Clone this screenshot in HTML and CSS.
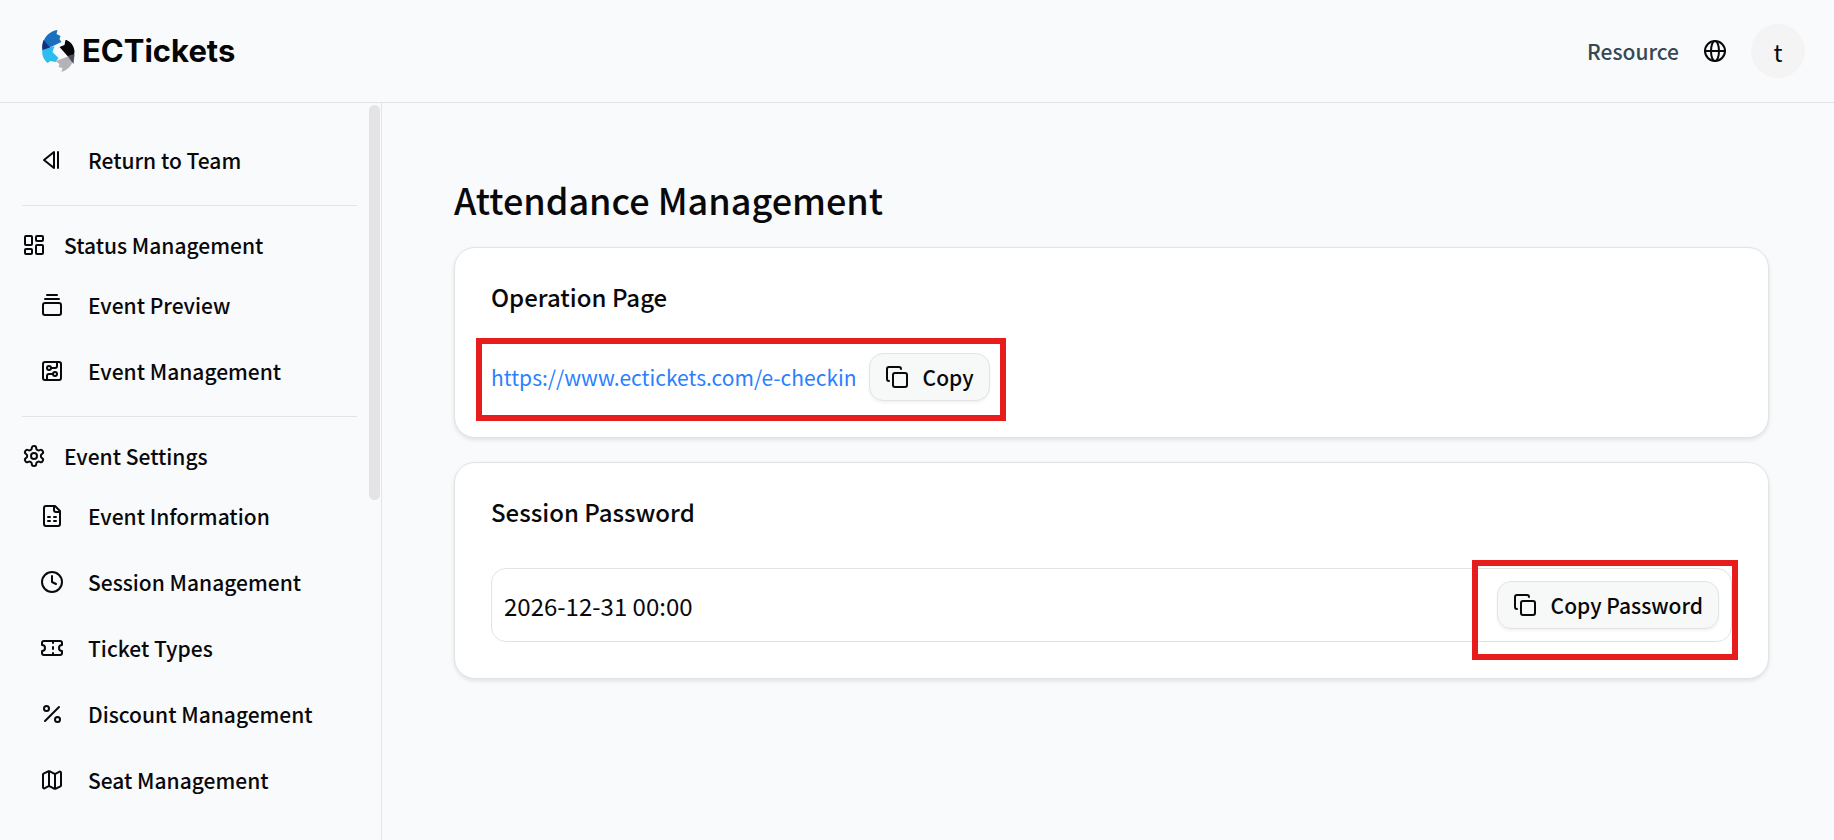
FILE: index.html
```html
<!DOCTYPE html>
<html lang="en">
<head>
    <meta charset="UTF-8">
    <meta name="viewport" content="width=device-width, initial-scale=1.0">
    <title>Attendance Management - ECTickets</title>
    <link rel="stylesheet" href="styles.css">
</head>
<body>
<header class="topbar">
    <a href="#" class="logo">
        <svg class="logo-mark" viewBox="0 0 34 42" aria-hidden="true">
            <path fill="#1a70bf" d="M16 0l-1 4 4 2-1 3 2 3L5 19 1 16C2 7 8 1 16 0z"/>
            <path fill="#14307c" d="M2 10l7 8-8 3C0 17 1 13 2 10z"/>
            <path fill="#2bbdee" d="M1 20l12-4-2 6 6 6-3 4-5-1-3 2C2 29 0 25 1 20z"/>
            <path fill="#050505" d="M25 10c5 2 8 7 8 12l-1 5-6-1-8-9 5-2 1-5z"/>
            <path fill="#b5b3b5" d="M33 25c-1 9-6 15-13 17l1-4-4-1 1-3-4-3 14-5z"/>
            <path fill="#4b4f5b" d="M33 24l-1 10-6-8z"/>
        </svg>
        <span>ECTickets</span>
    </a>
    <div class="topbar-right">
        <a href="#" class="resource">Resource</a>
        <button class="icon-button" aria-label="Language">
            <svg class="icon" viewBox="0 0 24 24"><circle cx="12" cy="12" r="10"/><ellipse cx="12" cy="12" rx="4" ry="10"/><path d="M2 12h20"/></svg>
        </button>
        <button class="avatar">t</button>
    </div>
</header>

<div class="layout">
    <aside class="sidebar">
        <nav>
            <a href="#" class="item">
                <svg class="icon" viewBox="0 0 24 24"><path d="M14 4v16L4 12zM18 4v16"/></svg>
                Return to Team
            </a>

            <hr>
            <h2 class="group">
                <svg class="icon" viewBox="0 0 24 24"><rect x="3" y="3" width="7" height="9" rx="1"/><rect x="14" y="3" width="7" height="5" rx="1"/><rect x="14" y="12" width="7" height="9" rx="1"/><rect x="3" y="16" width="7" height="5" rx="1"/></svg>
                Status Management
            </h2>
            <a href="#" class="item">
                <svg class="icon" viewBox="0 0 24 24"><path d="M7 2h10M5 6h14"/><rect x="3" y="10" width="18" height="12" rx="2"/></svg>
                Event Preview
            </a>
            <a href="#" class="item">
                <svg class="icon" viewBox="0 0 24 24"><rect x="3" y="3" width="18" height="18" rx="2"/><path d="M11 9h4a2 2 0 0 0 2-2V3M7 21v-4a2 2 0 0 1 2-2h4"/><circle cx="9" cy="9" r="2"/><circle cx="15" cy="15" r="2"/></svg>
                Event Management
            </a>

            <hr>
            <h2 class="group">
                <svg class="icon" viewBox="0 0 24 24"><path d="M12.22 2h-.44a2 2 0 0 0-2 2v.18a2 2 0 0 1-1 1.73l-.43.25a2 2 0 0 1-2 0l-.15-.08a2 2 0 0 0-2.73.73l-.22.38a2 2 0 0 0 .73 2.73l.15.1a2 2 0 0 1 1 1.72v.51a2 2 0 0 1-1 1.74l-.15.09a2 2 0 0 0-.73 2.73l.22.38a2 2 0 0 0 2.73.73l.15-.08a2 2 0 0 1 2 0l.43.25a2 2 0 0 1 1 1.73V20a2 2 0 0 0 2 2h.44a2 2 0 0 0 2-2v-.18a2 2 0 0 1 1-1.73l.43-.25a2 2 0 0 1 2 0l.15.08a2 2 0 0 0 2.73-.73l.22-.39a2 2 0 0 0-.73-2.73l-.15-.08a2 2 0 0 1-1-1.74v-.5a2 2 0 0 1 1-1.74l.15-.09a2 2 0 0 0 .73-2.73l-.22-.38a2 2 0 0 0-2.73-.73l-.15.08a2 2 0 0 1-2 0l-.43-.25a2 2 0 0 1-1-1.73V4a2 2 0 0 0-2-2z"/><circle cx="12" cy="12" r="3"/></svg>
                Event Settings
            </h2>
            <a href="#" class="item">
                <svg class="icon" viewBox="0 0 24 24"><path d="M15 2H6a2 2 0 0 0-2 2v16a2 2 0 0 0 2 2h12a2 2 0 0 0 2-2V7zM14 2v4a2 2 0 0 0 2 2h4M8 13h2M14 13h2M8 17h2M14 17h2"/></svg>
                Event Information
            </a>
            <a href="#" class="item">
                <svg class="icon" viewBox="0 0 24 24"><circle cx="12" cy="12" r="10"/><path d="M12 6v6l4 2"/></svg>
                Session Management
            </a>
            <a href="#" class="item">
                <svg class="icon" viewBox="0 0 24 24"><path d="M2 9a3 3 0 0 1 0 6v2a2 2 0 0 0 2 2h16a2 2 0 0 0 2-2v-2a3 3 0 0 1 0-6V7a2 2 0 0 0-2-2H4a2 2 0 0 0-2 2zM13 5v2M13 17v2M13 11v2"/></svg>
                Ticket Types
            </a>
            <a href="#" class="item">
                <svg class="icon" viewBox="0 0 24 24"><path d="M19 5L5 19"/><circle cx="6.500" cy="6.500" r="2.500"/><circle cx="17.500" cy="17.500" r="2.500"/></svg>
                Discount Management
            </a>
            <a href="#" class="item">
                <svg class="icon" viewBox="0 0 24 24"><path d="M14.100 5.550a2 2 0 0 0 1.800 0l3.650-1.830A1 1 0 0 1 21 4.620v12.760a1 1 0 0 1-.55.900l-4.550 2.270a2 2 0 0 1-1.800 0l-4.200-2.100a2 2 0 0 0-1.800 0l-3.650 1.830A1 1 0 0 1 3 19.380V6.620a1 1 0 0 1 .55-.900l4.550-2.270a2 2 0 0 1 1.800 0zM15 5.760v15M9 3.240v15"/></svg>
                Seat Management
            </a>
        </nav>
        <div class="scroll-thumb"></div>
    </aside>

    <main>
        <h1>Attendance Management</h1>

        <section class="card">
            <h2>Operation Page</h2>
            <div class="link-row marked">
                <a href="https://www.ectickets.com/e-checkin">https://www.ectickets.com/e-checkin</a>
                <button class="copy-button">
                    <svg class="icon" viewBox="0 0 24 24"><rect x="8" y="8" width="14" height="14" rx="2"/><path d="M4 16a2 2 0 0 1-2-2V4a2 2 0 0 1 2-2h10a2 2 0 0 1 2 2"/></svg>
                    Copy
                </button>
            </div>
        </section>

        <section class="card">
            <h2>Session Password</h2>
            <div class="session-row">
                <span>2026-12-31 00:00</span>
                <div class="marked marked-wide">
                    <button class="copy-button">
                        <svg class="icon" viewBox="0 0 24 24"><rect x="8" y="8" width="14" height="14" rx="2"/><path d="M4 16a2 2 0 0 1-2-2V4a2 2 0 0 1 2-2h10a2 2 0 0 1 2 2"/></svg>
                        Copy Password
                    </button>
                </div>
            </div>
        </section>
    </main>
</div>
</body>
</html>
```
FILE: styles.css
```css
* {
    box-sizing: border-box;
}

body {
    font-family: "Noto Sans CJK TC", "Noto Sans", sans-serif;
    margin: 0;
    height: 100vh;
    display: flex;
    flex-direction: column;
    background-color: #f9fafc;
    color: #09090b;
    font-size: 21px;
    overflow: hidden;
}

h1, h2 {
    margin: 0;
    font-weight: 500;
}

a {
    color: inherit;
    text-decoration: none;
}

button {
    font: inherit;
    color: inherit;
    cursor: pointer;
}

.icon {
    width: 24px;
    height: 24px;
    flex: none;
    fill: none;
    stroke: currentColor;
    stroke-width: 2;
    stroke-linecap: round;
    stroke-linejoin: round;
}

/* Top bar */
.topbar {
    display: flex;
    align-items: center;
    justify-content: space-between;
    padding: 24px 29px 24px 41px;
    border-bottom: 1px solid #e4e4e7;
}

.logo {
    display: flex;
    align-items: center;
    gap: 6px;
    font-family: Inter, sans-serif;
    font-size: 31px;
    font-weight: 700;
    line-height: 44px;
    color: #050505;
}

.logo-mark {
    width: 35px;
    height: 42px;
}

.topbar-right {
    display: flex;
    align-items: center;
}

.resource {
    color: #364852;
    font-weight: 500;
    margin-right: 24px;
}

.icon-button {
    display: flex;
    padding: 0;
    border: none;
    background: none;
    margin-right: 24px;
}

.avatar {
    width: 54px;
    height: 54px;
    padding: 0;
    border: none;
    border-radius: 50%;
    background-color: #f4f4f4;
    font-size: 24px;
}

.layout {
    flex: 1;
    display: flex;
    min-height: 0;
}

/* Sidebar */
.sidebar {
    position: relative;
    width: 382px;
    flex: none;
    padding: 24px 24px 0 22px;
    border-right: 1px solid #e4e4e7;
    overflow: hidden;
}

.sidebar hr {
    margin: 12px 0;
    border: none;
    border-top: 1px solid #e4e4e7;
}

.group,
.item {
    display: flex;
    align-items: center;
    font-size: 21px;
    font-weight: 500;
}

.group {
    height: 54px;
    gap: 18px;
}

.item {
    height: 66px;
    gap: 24px;
    padding-left: 18px;
}

.scroll-thumb {
    position: absolute;
    top: 2px;
    right: 1px;
    width: 11px;
    height: 395px;
    border-radius: 6px;
    background-color: #e4e4e6;
}

/* Content */
main {
    flex: 1;
    padding: 72px 65px 24px 72px;
}

h1 {
    font-size: 36px;
    line-height: 48px;
    margin-bottom: 24px;
}

.card {
    background-color: white;
    border: 1px solid #e2e4e4;
    border-radius: 21px;
    padding: 36px;
    margin-bottom: 24px;
    box-shadow: 0 2px 4px rgba(0, 0, 0, 0.1);
}

.card h2 {
    font-size: 24px;
    line-height: 26px;
    margin-bottom: 43px;
}

.link-row {
    display: flex;
    align-items: center;
    gap: 12px;
    width: fit-content;
}

.link-row a {
    color: #2b7fff;
}

.copy-button {
    display: flex;
    align-items: center;
    gap: 14px;
    height: 48px;
    padding: 0 15px;
    border: 1px solid #e2e4e4;
    border-radius: 14px;
    background-color: #f7f9f9;
    font-weight: 500;
    box-shadow: 0 2px 3px rgba(0, 0, 0, 0.05);
}

.session-row {
    display: flex;
    align-items: center;
    justify-content: space-between;
    padding: 12px;
    border: 1px solid #e2e4e4;
    border-radius: 15px;
    font-size: 24px;
}

.session-row .copy-button {
    font-size: 21px;
}

/* Red frame around the parts to click */
.marked {
    position: relative;
}

.marked::after {
    content: "";
    position: absolute;
    inset: -15px -16px -20px -15px;
    border: 6px solid #e71c1c;
    pointer-events: none;
}

.marked-wide::after {
    inset: -21px -19px -31px -25px;
}
```
